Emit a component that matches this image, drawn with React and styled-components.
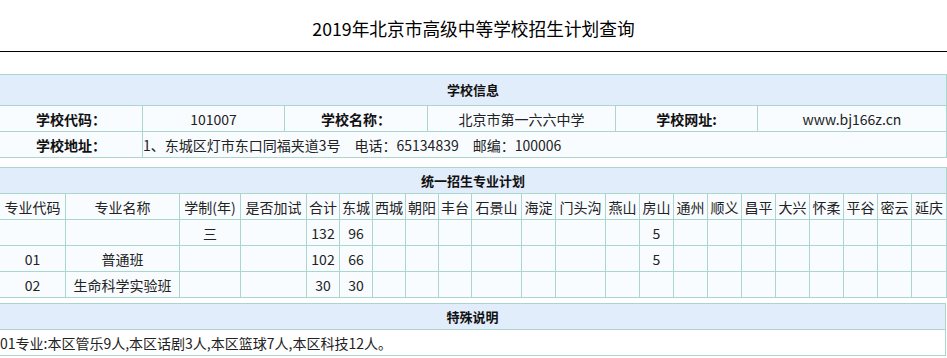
import React from 'react';
import styled, { createGlobalStyle } from 'styled-components';

const GlobalStyle = createGlobalStyle`
  body {
    margin: 0;
    background: #fff;
    font-family: "Noto Sans CJK SC", "Noto Sans", sans-serif;
    color: #222;
    overflow: hidden;
  }
`;

const Page = styled.div`
  width: 947px;
`;

const Title = styled.div`
  height: 52px;
  border-bottom: 1px solid #000;
  display: flex;
  align-items: center;
  justify-content: center;
  padding-top: 4px;
  box-sizing: border-box;
  font-size: 17.7px;
  color: #000;
`;

const Table = styled.table`
  width: 947px;
  margin-left: -1px;
  margin-top: ${(p) => p.$gap}px;
  border-collapse: collapse;
  table-layout: fixed;
  font-size: 14px;

  td, th {
    border: 1px solid #abd6d0;
    padding: 0;
    height: 25px;
    text-align: center;
    white-space: nowrap;
    overflow: hidden;
    line-height: 18px;
  }
`;

const HeadCell = styled.th`
  background: #e1edfb;
  font-weight: bold;
  font-size: 13px;
  color: #111;
  && {
    height: ${(p) => p.$h || 25}px;
  }
`;

const Cell = styled.td`
  background: #f8fcff;
  font-weight: ${(p) => (p.$bold ? 'bold' : 'normal')};
  color: ${(p) => (p.$bold ? '#111' : '#222')};
  && {
    text-align: ${(p) => p.$align || 'center'};
  }
`;

const NoteCell = styled.td`
  background: #fff;
  && {
    text-align: left;
  }
`;

const districts = [
  '合计', '东城', '西城', '朝阳', '丰台', '石景山', '海淀', '门头沟', '燕山',
  '房山', '通州', '顺义', '昌平', '大兴', '怀柔', '平谷', '密云', '延庆',
];
const planWidths = [66, 114, 61, 66, 33, 33, 33, 33, 33, 50, 34, 50, 34, 34, 34, 34, 34, 34, 34, 34, 34, 35];

const rows = [
  { code: '', name: '', years: '三', test: '', counts: { 合计: '132', 东城: '96', 房山: '5' } },
  { code: '01', name: '普通班', years: '', test: '', counts: { 合计: '102', 东城: '66', 房山: '5' } },
  { code: '02', name: '生命科学实验班', years: '', test: '', counts: { 合计: '30', 东城: '30' } },
];

const App = () => {
  return (
    <Page>
      <GlobalStyle />
      <Title>2019年北京市高级中等学校招生计划查询</Title>

      <Table $gap={22}>
        <colgroup>
          {[143, 142, 143, 188, 142, 189].map((w, i) => (
            <col key={i} style={{ width: w }} />
          ))}
        </colgroup>
        <tbody>
          <tr>
            <HeadCell colSpan={6} $h={30}>学校信息</HeadCell>
          </tr>
          <tr>
            <Cell $bold>学校代码：</Cell>
            <Cell>101007</Cell>
            <Cell $bold>学校名称：</Cell>
            <Cell>北京市第一六六中学</Cell>
            <Cell $bold>学校网址:</Cell>
            <Cell>www.bj166z.cn</Cell>
          </tr>
          <tr>
            <Cell $bold>学校地址：</Cell>
            <Cell colSpan={5} $align="left">1、东城区灯市东口同福夹道3号　电话：65134839　邮编：100006</Cell>
          </tr>
        </tbody>
      </Table>

      <Table $gap={9}>
        <colgroup>
          {planWidths.map((w, i) => (
            <col key={i} style={{ width: w }} />
          ))}
        </colgroup>
        <tbody>
          <tr>
            <HeadCell colSpan={22}>统一招生专业计划</HeadCell>
          </tr>
          <tr>
            <Cell>专业代码</Cell>
            <Cell>专业名称</Cell>
            <Cell>学制(年)</Cell>
            <Cell>是否加试</Cell>
            {districts.map((d) => (
              <Cell key={d}>{d}</Cell>
            ))}
          </tr>
          {rows.map((r, i) => (
            <tr key={i}>
              <Cell>{r.code}</Cell>
              <Cell>{r.name}</Cell>
              <Cell>{r.years}</Cell>
              <Cell>{r.test}</Cell>
              {districts.map((d) => (
                <Cell key={d}>{r.counts[d] || ''}</Cell>
              ))}
            </tr>
          ))}
        </tbody>
      </Table>

      <Table $gap={5}>
        <tbody>
          <tr>
            <HeadCell>特殊说明</HeadCell>
          </tr>
          <tr>
            <NoteCell>01专业:本区管乐9人,本区话剧3人,本区篮球7人,本区科技12人。</NoteCell>
          </tr>
        </tbody>
      </Table>
    </Page>
  );
};

export default App;
